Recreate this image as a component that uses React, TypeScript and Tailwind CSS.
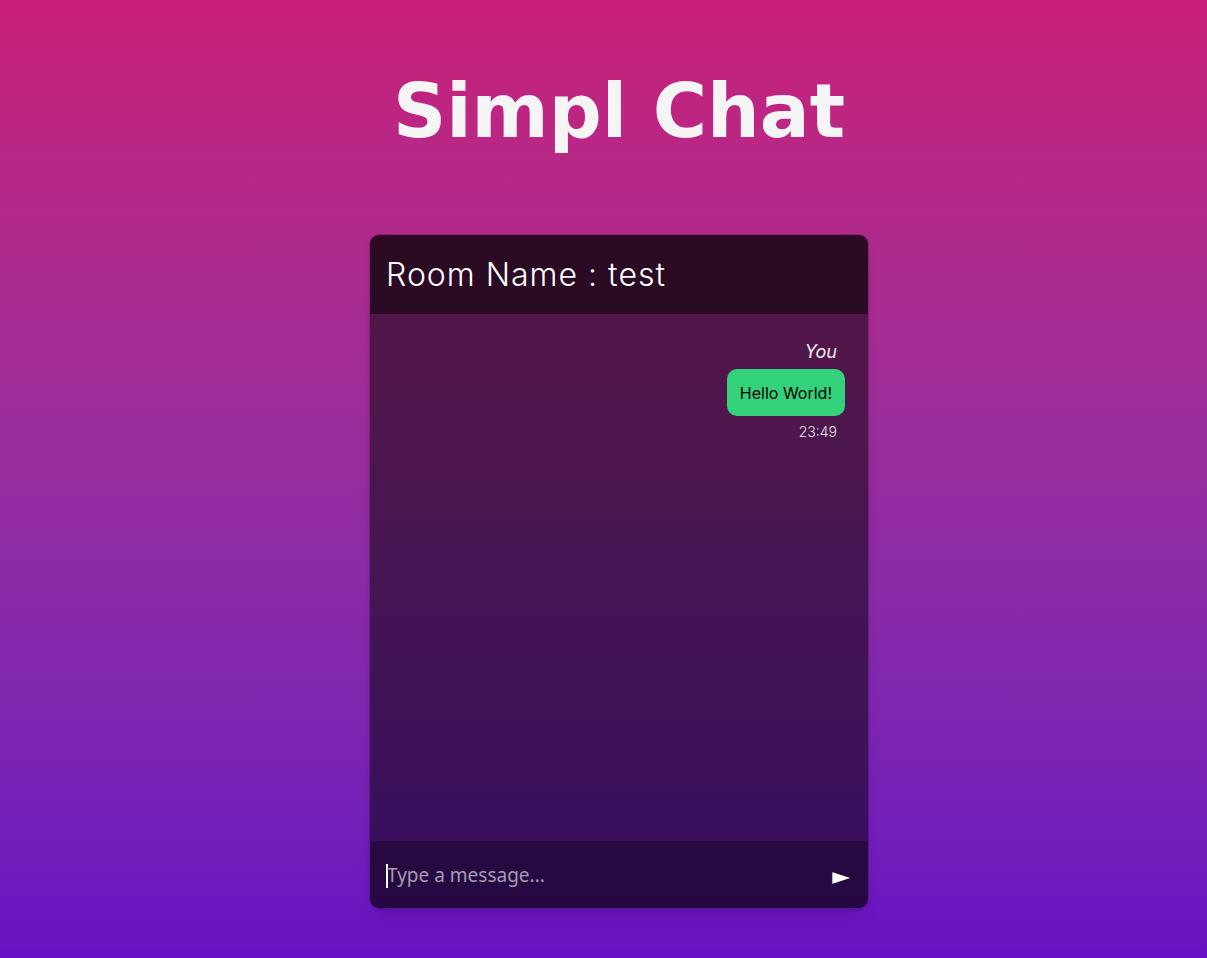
import React from 'react';

const poppins = { fontFamily: 'Inter, "Noto Sans", sans-serif' };

const App: React.FC = () => {
  return (
    <div
      className="min-h-screen w-full flex flex-col items-center pl-[31px] bg-gradient-to-b from-[#c91e77] to-[#6710c3]"
      style={poppins}
    >
      <h1
        className="mt-[52px] h-[118px] flex items-center text-[74px] font-bold text-[#f5f5f5] leading-none"
        style={{ fontFamily: '"DejaVu Sans", sans-serif' }}
      >
        Simpl Chat
      </h1>

      <div className="mt-[64px] w-[500px] h-[675px] flex flex-col rounded-[10px] overflow-hidden border border-black/20 shadow-lg">
        {/* room header */}
        <div className="h-[79px] shrink-0 flex items-center px-4 bg-black/75">
          <h2 className="text-[32px] font-light tracking-[1px] text-white leading-none">Room Name : test</h2>
        </div>

        {/* messages */}
        <div className="flex-1 bg-black/50 pt-[26px] pr-[23px] flex flex-col items-end">
          <span className="italic text-[18px] text-[#eeeeee] pr-2 leading-6">You</span>
          <div className="mt-[5px] rounded-[10px] bg-[#32d17a] px-[13px] h-[47px] flex items-center text-[16px] text-black">
            Hello World!
          </div>
          <span className="mt-[6px] pr-2 text-[14px] font-light text-[#e8e8e8] leading-5">23:49</span>
        </div>

        {/* input */}
        <div className="h-[67px] shrink-0 flex items-center px-4 bg-black/65">
          <span className="w-[2px] h-[24px] bg-white mt-[3px] -mr-[1px]" />
          <input
            className="flex-1 bg-transparent outline-none text-[19px] text-white placeholder:text-[#a79bb0] mt-[2px]"
            style={{ fontFamily: '"Noto Sans", sans-serif' }}
            placeholder="Type a message..."
          />
          <button
            className="text-white text-[23px] leading-none pr-[2px] mt-[3px]"
            style={{ fontFamily: '"DejaVu Sans", sans-serif' }}
          >
            ►
          </button>
        </div>
      </div>
    </div>
  );
};

export default App;
